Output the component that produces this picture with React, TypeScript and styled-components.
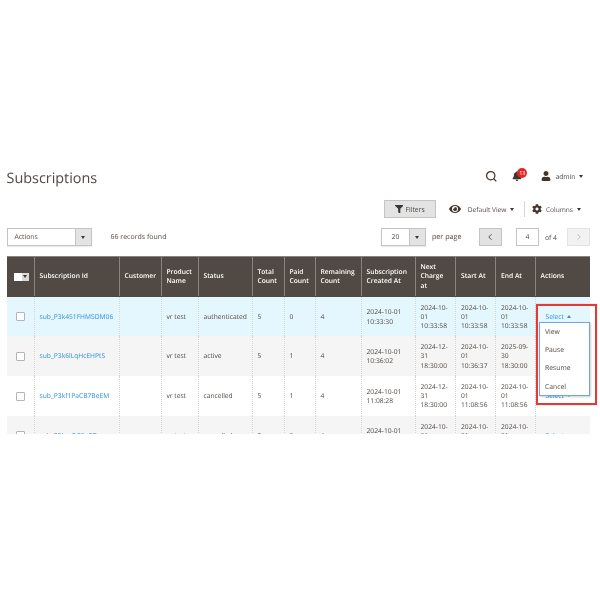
import React from "react";
import styled, { createGlobalStyle } from "styled-components";
import { FaBell, FaUser, FaFilter, FaEye, FaCog } from "react-icons/fa";
import { FiSearch, FiChevronLeft, FiChevronRight } from "react-icons/fi";

const Global = createGlobalStyle`
  html, body { margin: 0; padding: 0; background: #fff; }
  body {
    font-family: "Open Sans", "Noto Sans", sans-serif;
    color: #514943;
    width: 600px;
    height: 600px;
    overflow: hidden;
    text-rendering: geometricPrecision;
  }
`;

const Page = styled.div`
  box-sizing: border-box;
  width: 600px;
  padding: 168px 0 0 6.5px;
  will-change: transform;
`;

const TitleBar = styled.header`
  display: flex;
  align-items: center;
  justify-content: space-between;
  height: 21px;
  padding-right: 17px;
`;

const Title = styled.h1`
  margin: 0;
  font-size: 14.4px;
  line-height: 21px;
  font-weight: 400;
  color: #514943;
`;

const HeaderTools = styled.div`
  display: flex;
  align-items: center;
  margin-top: -5px;
`;

const SearchIcon = styled(FiSearch)`
  font-size: 12.5px;
  color: #41362f;
  stroke-width: 2.4;
  margin-right: 15px;
`;

const Bell = styled.span`
  position: relative;
  display: flex;
  margin-right: 19px;
  color: #41362f;
  font-size: 10px;
`;

const Badge = styled.span`
  position: absolute;
  top: -3px;
  left: 5px;
  min-width: 10px;
  height: 10px;
  border-radius: 5px;
  background: #e22626;
  color: #fff;
  font-size: 5.6px;
  line-height: 10px;
  text-align: center;
`;

const UserIcon = styled(FaUser)`
  font-size: 10px;
  color: #41362f;
  margin-right: 4px;
`;

const SmallText = styled.span`
  font-size: 6.8px;
  color: #514943;
`;

const Caret = styled.i<{ $up?: boolean; $color?: string }>`
  display: inline-block;
  width: 0;
  height: 0;
  margin-left: 3.5px;
  border-left: 2.5px solid transparent;
  border-right: 2.5px solid transparent;
  ${(p) =>
    p.$up
      ? `border-bottom: 3px solid ${p.$color || "#41362f"};`
      : `border-top: 3px solid ${p.$color || "#41362f"};`}
`;

const ToolRow = styled.div`
  display: flex;
  align-items: center;
  justify-content: flex-end;
  height: 18px;
  margin-top: 11px;
  padding-right: 19.5px;
`;

const FilterIcon = styled(FaFilter)`
  font-size: 8.5px;
  color: #41362f;
`;

const FilterButton = styled.button`
  display: flex;
  align-items: center;
  justify-content: center;
  gap: 2px;
  box-sizing: border-box;
  width: 52px;
  height: 18px;
  padding: 0;
  background: #e3e3e3;
  border: 1px solid #c4c4c4;
  font: inherit;
  font-size: 6.8px;
  color: #514943;
  margin-right: 13px;
`;

const ViewButton = styled.div`
  display: flex;
  align-items: center;
  font-size: 6.6px;
  color: #514943;
`;

const ViewIcon = styled(FaEye)`
  font-size: 12px;
  color: #41362f;
  margin-right: 7px;
`;

const GearIcon = styled(FaCog)`
  font-size: 10px;
  color: #41362f;
  margin-right: 4px;
`;

const Divider = styled.span`
  width: 1px;
  height: 16px;
  background: #d6d6d6;
  margin: 0 7px 0 10px;
`;

const PagerRow = styled.div`
  display: flex;
  align-items: center;
  height: 18px;
  margin-top: 10px;
  padding-right: 10px;
`;

const SelectBox = styled.div<{ $w: number }>`
  display: flex;
  box-sizing: border-box;
  width: ${(p) => p.$w}px;
  height: 18px;
  border: 1px solid #c4c4c4;
  background: #fff;
  font-size: 6.8px;
  box-shadow: 0 1px 1px rgba(0, 0, 0, 0.08);
`;

const SelectText = styled.span<{ $center?: boolean }>`
  flex: 1;
  line-height: 16px;
  padding-left: ${(p) => (p.$center ? "0" : "7px")};
  text-align: ${(p) => (p.$center ? "center" : "left")};
`;

const SelectArrow = styled.span`
  display: flex;
  align-items: center;
  justify-content: center;
  width: 15px;
  background: #e3e3e3;
  border-left: 1px solid #c4c4c4;
  & > i {
    margin: 0;
  }
`;

const Records = styled.span`
  font-size: 7px;
  margin-left: 19px;
  flex: 1;
`;

const PerPage = styled.span`
  font-size: 7.2px;
  margin: 0 17.5px 0 6px;
`;

const PageButton = styled.span<{ $off?: boolean }>`
  display: flex;
  align-items: center;
  justify-content: center;
  box-sizing: border-box;
  width: 23px;
  height: 18px;
  font-size: 10px;
  border: 1px solid ${(p) => (p.$off ? "#e3e3e3" : "#c4c4c4")};
  background: ${(p) => (p.$off ? "#f2f2f2" : "#e3e3e3")};
  color: ${(p) => (p.$off ? "#b5b5b5" : "#41362f")};
`;

const PageInput = styled.span`
  box-sizing: border-box;
  width: 23px;
  height: 18px;
  margin-left: 14px;
  border: 1px solid #c4c4c4;
  font-size: 6.8px;
  line-height: 16px;
  text-align: center;
`;

const OfText = styled.span`
  font-size: 6.8px;
  margin: 0 10px 0 6px;
`;

const TableArea = styled.div`
  position: relative;
  width: 583px;
  margin-top: 10px;
`;

const TableClip = styled.div`
  height: 178px;
  overflow: hidden;
`;

const Table = styled.table`
  width: 583px;
  table-layout: fixed;
  border-collapse: collapse;
  font-size: 6.7px;
  line-height: 9.2px;
`;

const Th = styled.th`
  box-sizing: border-box;
  height: 40px;
  padding: 0 5px 1px;
  background: #514943;
  color: #fff;
  font-weight: 600;
  text-align: left;
  border-left: 1px solid #8a837e;
  border-top: 1px solid #8a837e;
  border-bottom: 1px solid #514943;
  &:first-child {
    border-left-color: #514943;
    padding: 0 0 1px 6px;
  }
`;

const HeadCheck = styled.span`
  display: inline-flex;
  align-items: center;
  box-sizing: border-box;
  width: 15px;
  height: 8px;
  background: #fff;
`;

const HeadCheckBox = styled.span`
  display: flex;
  align-items: center;
  justify-content: center;
  width: 7px;
  height: 8px;
  margin-left: auto;
  background: #d9d9d9;
  & > i {
    margin: 0;
  }
`;

const Tr = styled.tr<{ $bg: string }>`
  background: ${(p) => p.$bg};
`;

const Td = styled.td`
  box-sizing: border-box;
  height: 39.7px;
  padding: 0 5px;
  vertical-align: middle;
  color: #514943;
  border-left: 1px dotted #d6d6d6;
  border-right: 1px dotted #d6d6d6;
  overflow-wrap: break-word;
  &:first-child {
    border-left: none;
    text-align: center;
    padding: 0;
  }
  &:last-child {
    padding-left: 10px;
  }
`;

const Status = styled.span`
  white-space: nowrap;
`;

const Check = styled.span`
  display: inline-block;
  box-sizing: border-box;
  width: 9px;
  height: 9px;
  background: #fff;
  border: 1px solid #b5b5b5;
  border-radius: 1px;
  vertical-align: middle;
`;

const IdLink = styled.a`
  color: #2d8fdb;
  white-space: nowrap;
`;

const SelectLink = styled.a`
  display: inline-flex;
  align-items: center;
  color: #2d8fdb;
`;

const Menu = styled.ul`
  position: absolute;
  left: 532.5px;
  top: 66px;
  box-sizing: border-box;
  width: 51px;
  height: 74px;
  margin: 0;
  padding: 0;
  list-style: none;
  background: #fff;
  border: 1px solid #6fa8d8;
  box-shadow: 1px 1px 2px rgba(0, 0, 0, 0.2);
  font-size: 6.8px;
  color: #514943;
`;

const MenuItem = styled.li`
  height: 18.2px;
  line-height: 18.2px;
  padding-left: 5px;
`;

const Highlight = styled.div`
  position: absolute;
  left: 529.5px;
  top: 47.5px;
  box-sizing: border-box;
  width: 61px;
  height: 101px;
  border: 2px solid #e53935;
  box-shadow: 0 0 1px rgba(229, 57, 53, 0.5);
  pointer-events: none;
`;

const widths = [27, 85, 42, 37, 54, 32, 31, 46, 54, 40.5, 40, 39.5, 55];
const heads = [
  "",
  "Subscription Id",
  "Customer",
  "Product Name",
  "Status",
  "Total Count",
  "Paid Count",
  "Remaining Count",
  "Subscription Created At",
  "Next Charge at",
  "Start At",
  "End At",
  "Actions",
];

const rows = [
  ["sub_P3k451FHMSDM06", "authenticated", "5", "0", "2024-10-01 10:33:30", "2024-10-01 10:33:58", "2024-10-01 10:33:58", "2024-10-01 10:33:58", "#e5f7fe"],
  ["sub_P3k6lLqHcEHPtS", "active", "5", "1", "2024-10-01 10:36:02", "2024-12-31 18:30:00", "2024-10-01 10:36:37", "2025-09-30 18:30:00", "#f5f5f5"],
  ["sub_P3kf1PaCB7BeEM", "cancelled", "5", "1", "2024-10-01 11:08:28", "2024-12-31 18:30:00", "2024-10-01 11:08:56", "2024-10-01 11:08:56", "#ffffff"],
  ["sub_P3kmOC8nPTwug", "cancelled", "5", "0", "2024-10-01 11:15:10", "2024-10-01 11:15:40", "2024-10-01 11:15:40", "2024-10-01 11:15:40", "#f5f5f5"],
];

export default function App() {
  return (
    <Page>
      <Global />
      <TitleBar>
        <Title>Subscriptions</Title>
        <HeaderTools>
          <SearchIcon />
          <Bell>
            <FaBell />
            <Badge>13</Badge>
          </Bell>
          <UserIcon />
          <SmallText>admin</SmallText>
          <Caret />
        </HeaderTools>
      </TitleBar>
      <ToolRow>
        <FilterButton>
          <FilterIcon />
          Filters
        </FilterButton>
        <ViewButton>
          <ViewIcon />
          Default View
          <Caret />
        </ViewButton>
        <Divider />
        <ViewButton>
          <GearIcon />
          Columns
          <Caret />
        </ViewButton>
      </ToolRow>
      <PagerRow>
        <SelectBox $w={85}>
          <SelectText>Actions</SelectText>
          <SelectArrow>
            <Caret />
          </SelectArrow>
        </SelectBox>
        <Records>66 records found</Records>
        <SelectBox $w={45}>
          <SelectText $center>20</SelectText>
          <SelectArrow>
            <Caret />
          </SelectArrow>
        </SelectBox>
        <PerPage>per page</PerPage>
        <PageButton>
          <FiChevronLeft />
        </PageButton>
        <PageInput>4</PageInput>
        <OfText>of 4</OfText>
        <PageButton $off>
          <FiChevronRight />
        </PageButton>
      </PagerRow>
      <TableArea>
        <TableClip>
          <Table>
            <colgroup>
              {widths.map((w, i) => (
                <col key={i} style={{ width: w }} />
              ))}
            </colgroup>
            <thead>
              <tr>
                {heads.map((h, i) => (
                  <Th key={i}>
                    {i === 0 ? (
                      <HeadCheck>
                        <HeadCheckBox>
                          <Caret />
                        </HeadCheckBox>
                      </HeadCheck>
                    ) : (
                      h
                    )}
                  </Th>
                ))}
              </tr>
            </thead>
            <tbody>
              {rows.map((r, i) => (
                <Tr key={i} $bg={r[8]}>
                  <Td>
                    <Check />
                  </Td>
                  <Td>
                    <IdLink>{r[0]}</IdLink>
                  </Td>
                  <Td />
                  <Td>vr test</Td>
                  <Td>
                    <Status>{r[1]}</Status>
                  </Td>
                  <Td>{r[2]}</Td>
                  <Td>{r[3]}</Td>
                  <Td>4</Td>
                  <Td>{r[4]}</Td>
                  <Td>{r[5]}</Td>
                  <Td>{r[6]}</Td>
                  <Td>{r[7]}</Td>
                  <Td>
                    <SelectLink>
                      Select
                      <Caret $up={i === 0} $color="#2d8fdb" />
                    </SelectLink>
                  </Td>
                </Tr>
              ))}
            </tbody>
          </Table>
        </TableClip>
        <Menu>
          <MenuItem>View</MenuItem>
          <MenuItem>Pause</MenuItem>
          <MenuItem>Resume</MenuItem>
          <MenuItem>Cancel</MenuItem>
        </Menu>
        <Highlight />
      </TableArea>
    </Page>
  );
}
